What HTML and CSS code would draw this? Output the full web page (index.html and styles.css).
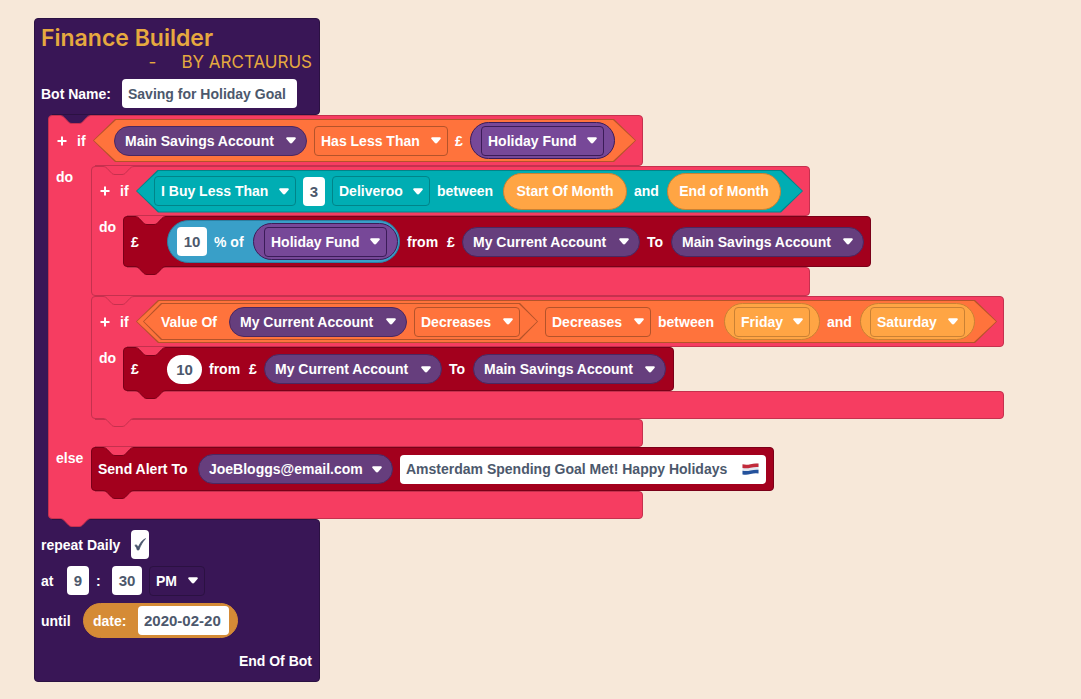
FILE: index.html
```html
<!DOCTYPE html>
<html lang="en">
<head>
<meta charset="utf-8">
<title>Finance Builder</title>
<link rel="stylesheet" href="styles.css">
</head>
<body>
<svg class="defs" aria-hidden="true">
  <symbol id="arrow" viewBox="0 0 10 7"><path d="M1.2.3h7.6c1 0 1.3.9.7 1.6L6.3 5.7c-.8.9-1.8.9-2.6 0L.5 1.900C-.1 1.200.2.3 1.200.3z" fill="#fff"/></symbol>
  <symbol id="tab" viewBox="0 0 31 9"><path class="tab-fill" d="M0 0V1C2 1 3 1.300 4 2.300L8 6.500C9 7.600 10 8.500 12 8.500H19C21 8.500 22 7.600 23 6.500L27 2.300C28 1.300 29 1 31 1V0Z"/><path class="tab-line" d="M0 .5C2 .5 3 1.300 4 2.300L8 6.500C9 7.600 10 8.500 12 8.500H19C21 8.500 22 7.600 23 6.500L27 2.300C28 1.300 29 .5 31 .5"/></symbol>
  <symbol id="plus" viewBox="0 0 10 10"><path d="M5 .5v9M.5 5h9" stroke="#fff" stroke-width="2"/></symbol>
</svg>
<main class="workspace">
  <form class="block purple">
    <header class="seg head title-head">
      <h1 class="title">Finance Builder</h1>
      <p class="byline"><span>-</span><span>BY ARCTAURUS</span></p>
      <div class="row">
        <label class="w-name" for="bot-name">Bot Name:</label>
        <input class="input w-botname" id="bot-name" value="Saving for Holiday Goal">
      </div>
    </header>
    <div class="body">
      <div class="spine root-spine"></div>
      <div class="stack">
        <section class="block red in-purple">
          <svg class="tab notch"><use href="#tab"/></svg>
          <div class="seg head row">
            <button type="button" class="add" aria-label="Add condition"><svg><use href="#plus"/></svg></button><span class="if">if</span>
            <div class="hex orange pad-l">
              <span class="field pill violet w-main"><select aria-label="Account"><option>Main Savings Account</option></select><svg><use href="#arrow"/></svg></span>
              <span class="field w-less"><select aria-label="Comparison"><option>Has Less Than</option></select><svg><use href="#arrow"/></svg></span>
              <span class="w-pound">£</span>
              <span class="oval plum"><span class="field w-fund"><select aria-label="Fund"><option>Holiday Fund</option></select><svg><use href="#arrow"/></svg></span></span>
            </div>
          </div>
          <div class="body">
            <div class="spine wide">do</div>
            <div class="stack">
              <section class="block red">
                <svg class="tab notch"><use href="#tab"/></svg>
                <div class="seg head row compact">
                  <button type="button" class="add" aria-label="Add condition"><svg><use href="#plus"/></svg></button><span class="if">if</span>
                  <div class="hex teal">
                    <span class="field w-buy"><select aria-label="Purchase rule"><option>I Buy Less Than</option></select><svg><use href="#arrow"/></svg></span>
                    <input class="input w-digit" aria-label="Count" value="3">
                    <span class="field w-shop"><select aria-label="Merchant"><option>Deliveroo</option></select><svg><use href="#arrow"/></svg></span>
                    <span class="w-between">between</span>
                    <span class="oval amber w-start">Start Of Month</span>
                    <span class="w-and">and</span>
                    <span class="oval amber w-end">End of Month</span>
                  </div>
                </div>
                <div class="body">
                  <div class="spine">do</div>
                  <div class="stack">
                    <section class="block crimson in-red">
                      <svg class="tab notch"><use href="#tab"/></svg>
                      <div class="seg head only row">
                        <span class="lead">£</span>
                        <span class="oval blue">
                          <input class="input w-number" aria-label="Percent" value="10">
                          <span class="w-pct">% of</span>
                          <span class="oval plum"><span class="field w-fund"><select aria-label="Fund"><option>Holiday Fund</option></select><svg><use href="#arrow"/></svg></span></span>
                        </span>
                        <span class="w-from">from</span><span class="w-pound">£</span>
                        <span class="field pill violet w-current"><select aria-label="From account"><option>My Current Account</option></select><svg><use href="#arrow"/></svg></span>
                        <span class="w-to">To</span>
                        <span class="field pill violet w-main"><select aria-label="To account"><option>Main Savings Account</option></select><svg><use href="#arrow"/></svg></span>
                      </div>
                      <svg class="tab end"><use href="#tab"/></svg>
                    </section>
                  </div>
                </div>
                <div class="seg arm tall last"></div>
              </section>
              <section class="block red">
                <svg class="tab notch"><use href="#tab"/></svg>
                <div class="seg head row">
                  <button type="button" class="add" aria-label="Add condition"><svg><use href="#plus"/></svg></button><span class="if">if</span>
                  <div class="hex orange pad-s">
                    <div class="hex orange inner">
                      <span class="w-value">Value Of</span>
                      <span class="field pill violet w-current"><select aria-label="Account"><option>My Current Account</option></select><svg><use href="#arrow"/></svg></span>
                      <span class="field w-change"><select aria-label="Change"><option>Decreases</option></select><svg><use href="#arrow"/></svg></span>
                    </div>
                    <span class="field w-change"><select aria-label="Trend"><option>Decreases</option></select><svg><use href="#arrow"/></svg></span>
                    <span class="w-between">between</span>
                    <span class="oval amber"><span class="field w-fri"><select aria-label="First day"><option>Friday</option></select><svg><use href="#arrow"/></svg></span></span>
                    <span class="w-and">and</span>
                    <span class="oval amber"><span class="field w-sat"><select aria-label="Last day"><option>Saturday</option></select><svg><use href="#arrow"/></svg></span></span>
                  </div>
                </div>
                <div class="body">
                  <div class="spine">do</div>
                  <div class="stack">
                    <section class="block crimson in-red">
                      <svg class="tab notch"><use href="#tab"/></svg>
                      <div class="seg head only row short">
                        <span class="lead">£</span>
                        <input class="input round" aria-label="Amount" value="10">
                        <span class="w-from">from</span><span class="w-pound">£</span>
                        <span class="field pill violet w-current"><select aria-label="From account"><option>My Current Account</option></select><svg><use href="#arrow"/></svg></span>
                        <span class="w-to">To</span>
                        <span class="field pill violet w-main"><select aria-label="To account"><option>Main Savings Account</option></select><svg><use href="#arrow"/></svg></span>
                      </div>
                      <svg class="tab end"><use href="#tab"/></svg>
                    </section>
                  </div>
                </div>
                <div class="seg arm last"></div>
                <svg class="tab end"><use href="#tab"/></svg>
              </section>
            </div>
          </div>
          <div class="seg arm"></div>
          <div class="body">
            <div class="spine wide">else</div>
            <div class="stack">
              <section class="block crimson in-red">
                <svg class="tab notch"><use href="#tab"/></svg>
                <div class="seg head only row short">
                  <span class="w-alert">Send Alert To</span>
                  <span class="field pill violet w-mail"><select aria-label="Recipient"><option>JoeBloggs@email.com</option></select><svg><use href="#arrow"/></svg></span>
                  <span class="message">
                    <input class="input w-message" aria-label="Message" value="Amsterdam Spending Goal Met! Happy Holidays">
                    <svg class="flag" viewBox="0 0 17 12" role="img" aria-label="Netherlands flag"><path fill="#e3e7ee" d="M.5 1.500Q4.500 2.500 8.500 1.200T16.500.5V10Q12.500 9.500 8.500 10.500T.5 11z"/><path fill="#c22b3b" d="M.5 1.300Q4.500 2.300 8.500 1.200T16.500.5V4Q12.500 3.700 8.500 4.700T.5 4.900z"/><path fill="#24529c" d="M.5 7.700Q4.500 8.600 8.500 7.500T16.500 6.700V10.500Q12.500 10 8.500 11.100T.5 11.400z"/></svg>
                  </span>
                </div>
                <svg class="tab end"><use href="#tab"/></svg>
              </section>
            </div>
          </div>
          <div class="seg arm last"></div>
          <svg class="tab end"><use href="#tab"/></svg>
        </section>
      </div>
    </div>
    <footer class="seg last foot">
      <div class="row line">
        <label class="w-repeat" for="daily">repeat Daily</label>
        <span class="check"><input type="checkbox" id="daily" checked><svg viewBox="0 0 12 13"><path d="M.8 7.500C2 6.500 3 6.700 4.200 9.300 6 5.300 8 2.500 11.500.6 8.500 4 6.500 7.500 4.800 12H3.300C2.600 9.800 2 8.300.8 7.500z" fill="#46536a" stroke="#46536a" stroke-width=".8"/></svg></span>
      </div>
      <div class="row line time">
        <label class="w-at" for="hour">at</label>
        <input class="input w-digit" id="hour" value="9">
        <span class="colon">:</span>
        <input class="input w-number" aria-label="Minutes" value="30">
        <span class="field w-pm"><select aria-label="AM or PM"><option>PM</option></select><svg><use href="#arrow"/></svg></span>
      </div>
      <div class="row line until">
        <span class="w-until">until</span>
        <span class="oval ochre"><label class="w-date" for="date">date:</label><input class="input w-day" id="date" value="2020-02-20"></span>
      </div>
      <p class="finish">End Of Bot</p>
    </footer>
  </form>
</main>
</body>
</html>
```
FILE: styles.css
```css
* { box-sizing: border-box; }

body {
  margin: 0;
  background: #f7e8d9;
  color: #fff;
  font: bold 14px/16px "Liberation Sans", Arial, sans-serif;
}

h1, p { margin: 0; }

.defs { position: absolute; width: 0; height: 0; }

.workspace {
  display: flex;
  align-items: flex-start;
  padding: 18px 0 16px 34px;
}

/* Block colours */
.purple { --fill: #391656; --line: #2b1142; }
.red { --fill: #f63d61; --line: #c5314e; --above: #f63d61; }
.crimson { --fill: #a3001d; --line: #7a0018; }
.in-purple { --above: #391656; }
.in-red { --above: #f63d61; }
.orange { --fill: #ff733c; --line: #b4532a; }
.teal { --fill: #00adb3; --line: #008489; }
.violet { --fill: #663e7d; --line: #4b2861; }
.plum { --fill: #774898; --line: #3b1c58; }
.amber { --fill: #ffa544; --line: #c98134; }
.blue { --fill: #399fc8; --line: #2b7fa2; }
.ochre { --fill: #d58b36; --line: #d58b36; }

/* Statement blocks */
.block {
  position: relative;
  display: flex;
  flex: none;
  flex-direction: column;
  width: max-content;
}

.seg {
  background: var(--fill);
  border: 1px solid var(--line);
  border-radius: 0 4px 4px 0;
}

.seg.head { border-top-left-radius: 4px; }
.seg.last, .seg.only { border-bottom-left-radius: 4px; }

.row { display: flex; align-items: center; gap: 7px; white-space: nowrap; }
.row > *, .hex > *, .oval > * { flex: none; }
.seg.row { min-height: 51px; padding: 0 6px; }
.seg.compact { min-height: 50px; }
.seg.short { min-height: 44px; }
.seg.row.short { padding-right: 7px; }

.arm { height: 28px; }
.arm.tall { height: 29px; }

.body { display: flex; width: 0; min-width: 100%; }
.stack { flex: none; }

.spine {
  position: relative;
  z-index: 1;
  flex: none;
  width: 32px;
  margin: -1px 0;
  padding: 4px 0 0 7px;
  background: var(--fill);
  border-left: 1px solid var(--line);
  box-shadow: 4px 0 0 var(--fill);
}
.spine.wide { width: 43px; }
.spine.root-spine { width: 14px; padding: 0; }
.stack .block { z-index: 2; }

.tab { position: absolute; left: 12px; z-index: 3; width: 31px; height: 9px; fill: none; }
.notch { top: 0; color: var(--above); }
.end { top: calc(100% - 1px); color: var(--fill); }
.tab-fill { fill: currentColor; }
.tab-line { stroke: var(--line); stroke-width: 1; fill: none; }

/* Value blocks */
.hex {
  position: relative;
  display: flex;
  align-items: center;
  gap: 7px;
  height: 43px;
  padding: 0 22px 0 18px;
  background: var(--line);
  clip-path: polygon(0 50%, 22px 0, calc(100% - 22px) 0, 100% 50%, calc(100% - 22px) 100%, 22px 100%);
}
.hex::before {
  content: "";
  position: absolute;
  inset: 1px;
  background: var(--fill);
  clip-path: inherit;
}
.hex > * { position: relative; }
.hex.pad-l { padding: 0 21px; }
.hex.pad-s { padding-left: 7px; }
.hex.inner {
  height: 37px;
  padding: 0 18px;
  clip-path: polygon(0 50%, 18px 0, calc(100% - 18px) 0, 100% 50%, calc(100% - 18px) 100%, 18px 100%);
}

.oval {
  display: flex;
  align-items: center;
  justify-content: center;
  gap: 7px;
  height: 37px;
  padding: 0 10px;
  background: var(--fill);
  border: 1px solid var(--line);
  border-radius: 22px;
}
.oval.blue { height: 43px; padding: 0 1px 0 9px; }
.oval.ochre { height: 35px; padding: 0 8px 0 9px; }
.oval.amber { padding: 0 9px; }

/* Fields */
.field {
  display: flex;
  align-items: center;
  justify-content: space-between;
  height: 30px;
  padding: 0 6px;
  border: 1px solid var(--line);
  border-radius: 4px;
}
.field.pill { padding: 0 10px; background: var(--fill); border-radius: 15px; }
.field svg { flex: none; width: 10px; height: 7px; }

select {
  appearance: none;
  margin: 0;
  padding: 0;
  border: 0;
  background: none;
  color: inherit;
  font: inherit;
}

.input {
  height: 29px;
  margin: 0;
  padding: 0 6px;
  border: 0;
  border-radius: 4px;
  background: #fff;
  color: #4c586c;
  font: inherit;
}
.input.w-digit, .input.w-number, .input.round { padding: 0; text-align: center; }
.input.w-digit, .input.w-number, .input.round, .input.w-day { font-size: 15px; }
.input.round { width: 35px; border-radius: 15px; }

.add {
  display: flex;
  width: 12px;
  margin: 0;
  padding: 0 1px;
  border: 0;
  background: none;
}
.add svg { width: 10px; height: 10px; }
.add + .if { width: 9px; margin: 0 0 0 2px; }
.seg.head > .add { margin-left: 1px; }
.lead { width: 29px; margin-left: 1px; }

.message { position: relative; }
.flag { position: absolute; right: 7px; top: 8px; width: 17px; height: 12px; }
.message, .check { display: flex; }

/* Widths shared by like fields and labels */
.w-main { width: 193px; }
.w-current { width: 178px; }
.w-mail { width: 195px; }
.w-less { width: 134px; }
.w-buy { width: 142px; }
.w-shop { width: 98px; }
.w-fund { width: 123px; }
.w-change { width: 106px; }
.w-fri { width: 76px; }
.w-sat { width: 95px; }
.w-pm { width: 56px; }
.w-start { width: 124px; }
.w-end { width: 114px; }
.w-digit { width: 22px; }
.w-number { width: 30px; }
.w-day { width: 91px; }
.w-botname { width: 175px; }
.w-message { width: 366px; }
.w-pound { width: 8px; }
.w-between { width: 59px; }
.w-and { width: 26px; }
.w-from { width: 33px; }
.w-to { width: 17px; }
.w-pct { width: 32px; }
.w-value { width: 61px; }
.w-alert { width: 93px; }
.w-name { width: 74px; }
.w-repeat { width: 83px; }
.w-at { width: 19px; }
.w-until { width: 35px; }
.w-date { width: 38px; }

/* Root block */
.title-head { min-width: 286px; min-height: 97px; padding: 6px 7px 6px 6px; }
.title {
  color: #e6a93f;
  font: 600 23px/26px Inter, sans-serif;
}
.byline {
  display: flex;
  justify-content: flex-end;
  gap: 25px;
  margin-bottom: 6px;
  color: #e6a93f;
  font: 400 17px/22px Inter, sans-serif;
}

.foot { min-height: 163px; padding: 10px 7px 10px 6px; }
.line { height: 29px; }
.line.time { margin-top: 7px; }
.line.until { height: 35px; margin-top: 8px; }
.foot .colon { width: 5px; margin-right: 4px; }
.check { position: relative; }
.check input {
  appearance: none;
  width: 18px;
  height: 29px;
  margin: 0;
  border-radius: 4px;
  background: #fff;
}
.check svg { position: absolute; left: 3px; top: 8px; width: 12px; height: 13px; pointer-events: none; }
.finish { margin-top: 15px; text-align: right; }
```
